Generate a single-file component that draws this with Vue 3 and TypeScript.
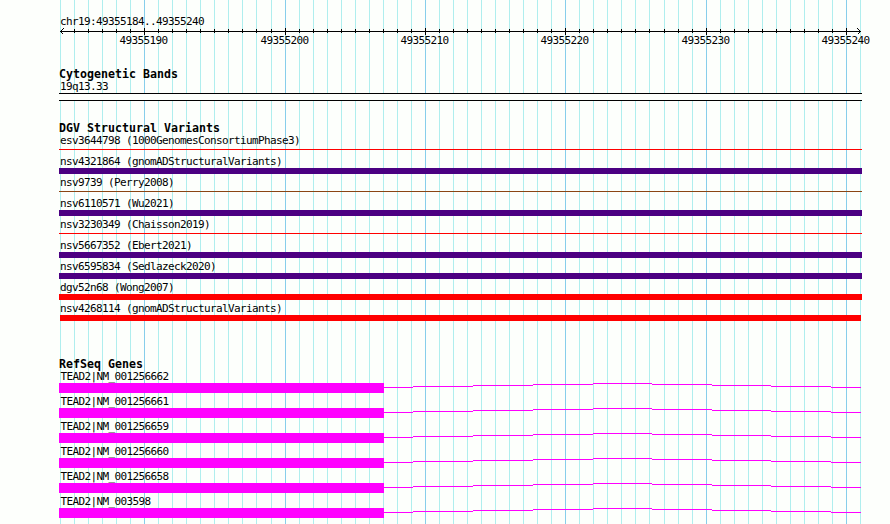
<template>
  <div class="browser">
    <!-- base pair grid behind the tracks -->
    <svg class="grid" width="890" height="524">
      <rect v-for="t in ticks" :key="t.x" :x="t.x" y="0" width="1" height="524" :class="t.major ? 'grid-major' : 'grid-minor'" />
    </svg>

    <main class="tracks">
      <header class="ruler">
        <p class="label">{{ region }}</p>
        <svg class="ruler-svg" width="831" height="26">
          <rect x="1" y="5" width="801" height="1" />
          <rect v-for="t in innerTicks" :key="t.x" :x="t.x - left" :y="t.major ? 2 : 3" width="1" :height="t.major ? 7 : 4" />
          <path class="arrow" d="M4.5 2.5L1.5 5.5L4.5 8.5M798.5 2.5L801.5 5.5L798.5 8.5" />
          <text v-for="t in majorTicks" :key="t.x" :x="t.x - left - 24.5" y="18">{{ t.pos }}</text>
        </svg>
      </header>

      <section class="track track--bands">
        <h2>Cytogenetic Bands</h2>
        <p class="label">19q13.33</p>
        <div class="band"></div>
      </section>

      <section class="track track--variants">
        <h2>DGV Structural Variants</h2>
        <div v-for="v in variants" :key="v.name" class="variant">
          <p class="label">{{ v.name }} ({{ v.study }})</p>
          <div class="bar" :class="v.type"></div>
        </div>
      </section>

      <section class="track">
        <h2>RefSeq Genes</h2>
        <div v-for="g in genes" :key="g" class="gene">
          <p class="label label--gene">TEAD2|{{ g }}</p>
          <div class="gene-row">
            <div class="exon"></div>
            <svg class="intron" width="477" height="10">
              <rect v-for="s in intron" :key="s.x" :x="s.x - 384" :y="s.y" :width="s.w" height="1" />
            </svg>
          </div>
        </div>
      </section>
    </main>
  </div>
</template>

<script setup lang="ts">
interface Tick { x: number; pos: number; major: boolean }
interface Variant { name: string; study: string; type: string }

const left = 59
const start = 49355184
const region = "chr19:49355184..49355240"

// one tick per base, 14px apart with two rounding steps across the width
const ticks: Tick[] = Array.from({ length: 58 }, (_, i) => {
  const pos = start + i
  return { x: 60 + i * 14 + (i >= 15 ? 1 : 0) + (i >= 43 ? 1 : 0), pos, major: pos % 10 === 0 }
})
const innerTicks = ticks.slice(1, -1)
const majorTicks = ticks.filter(t => t.major)

const variants: Variant[] = [
  { name: "esv3644798", study: "1000GenomesConsortiumPhase3", type: "thin-loss" },
  { name: "nsv4321864", study: "gnomADStructuralVariants", type: "complex" },
  { name: "nsv9739", study: "Perry2008", type: "thin-both" },
  { name: "nsv6110571", study: "Wu2021", type: "complex" },
  { name: "nsv3230349", study: "Chaisson2019", type: "thin-loss" },
  { name: "nsv5667352", study: "Ebert2021", type: "complex" },
  { name: "nsv6595834", study: "Sedlazeck2020", type: "complex" },
  { name: "dgv52n68", study: "Wong2007", type: "loss" },
  { name: "nsv4268114", study: "gnomADStructuralVariants", type: "loss inset" },
]

const genes = ["NM_001256662", "NM_001256661", "NM_001256659", "NM_001256660", "NM_001256658", "NM_003598"]

const edges = [384, 413, 473, 533, 593, 652, 712, 771, 831, 861]
const intron = edges.slice(0, -1).map((x, i) => ({ x, y: Math.abs(i - 4), w: edges[i + 1] - x }))
</script>

<style>
body { background: #fdfffc; overflow: hidden; }
</style>

<style scoped>
.browser { position: relative; width: 890px; height: 524px; overflow: hidden; background: #fdfffc; color: #000; font-family: "DejaVu Sans Mono", "Liberation Mono", monospace; font-size: 11px; letter-spacing: -0.622px; }
.grid { position: absolute; inset: 0; shape-rendering: crispEdges; }
.grid-minor { fill: #afeeee; }
.grid-major { fill: #87ceeb; }

.tracks { position: relative; display: flex; flex-direction: column; padding: 15px 0 0 59px; }
.label { margin: 0; padding-left: 1px; height: 12px; line-height: 14px; white-space: pre; }
.label--gene { padding-left: 1.5px; }
h2 { margin: 0; height: 12px; line-height: 12px; font-size: 11.6px; font-weight: bold; letter-spacing: 0.016px; white-space: pre; }

.ruler { height: 53px; }
.ruler .label { height: 11px; }
.ruler-svg { display: block; shape-rendering: crispEdges; }
.arrow { fill: none; stroke: #000; stroke-width: 1; }

.track--bands { height: 54px; }
.track--variants { height: 236px; }
.band { width: 803px; height: 8px; margin-top: 1px; box-sizing: border-box; border-top: 1px solid #000; border-bottom: 1px solid #000; background: #fdfffc; }

.variant { height: 21px; }
.bar { width: 803px; height: 6px; margin-top: 1px; }
.complex { background: #4b0082; }
.loss { background: #f00; }
.inset { width: 801px; margin-left: 1px; }
.thin-loss, .thin-both { height: 1px; margin-top: 3px; }
.thin-loss { background: #f00; }
.thin-both { background: #8b4513; }

.gene { height: 25px; }
.gene-row { display: flex; height: 10px; margin-top: 1px; }
.exon { width: 325px; background: #f0f; }
.intron { fill: #f0f; shape-rendering: crispEdges; }
</style>
